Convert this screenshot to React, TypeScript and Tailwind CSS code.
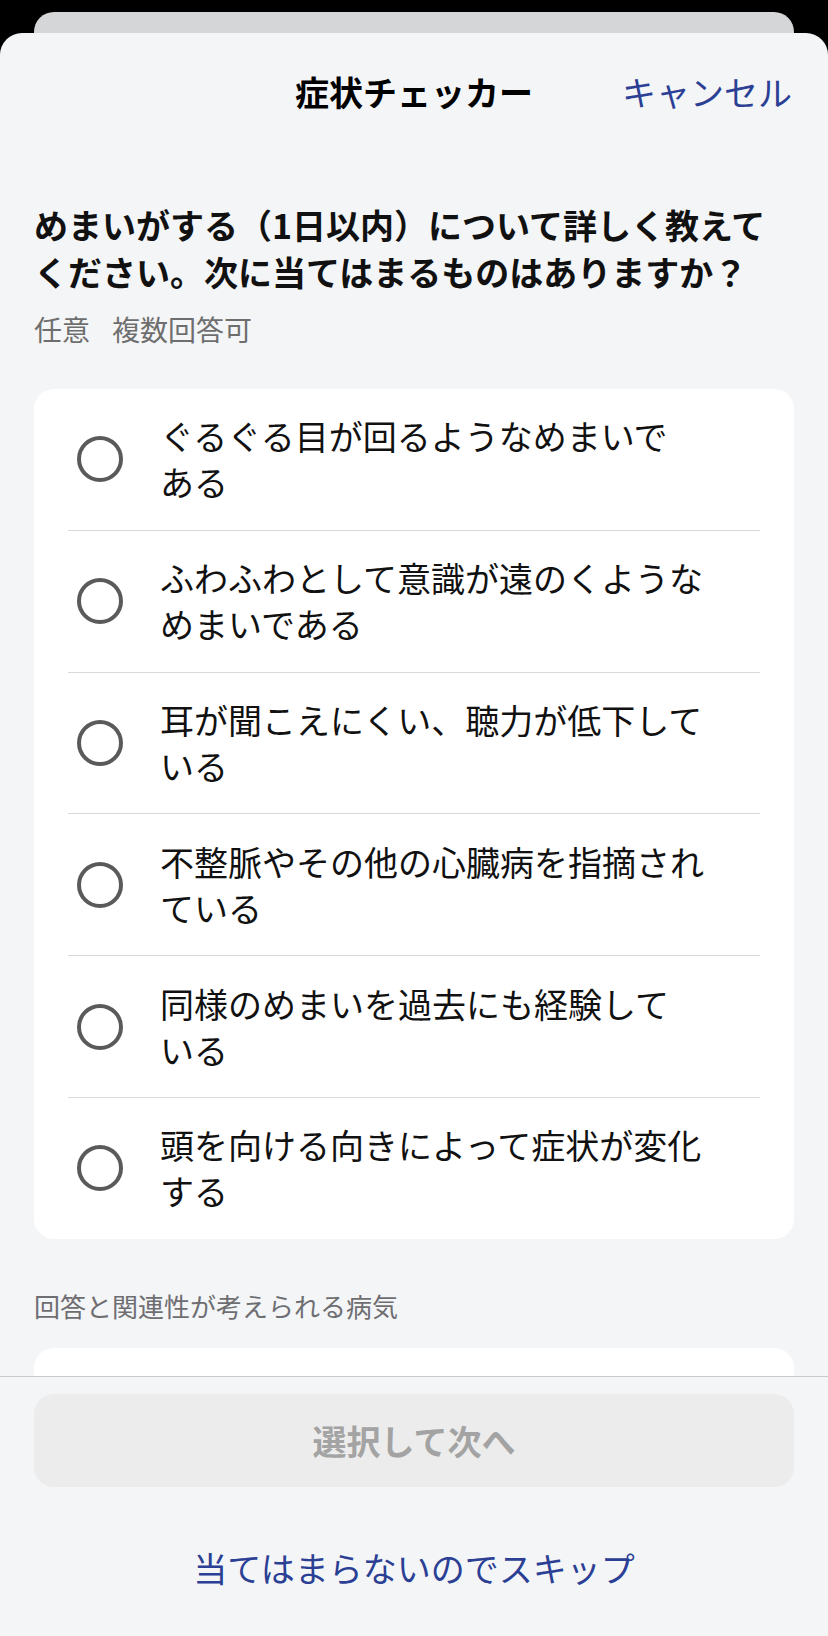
const options: string[][] = [
  ['ぐるぐる目が回るようなめまいで', 'ある'],
  ['ふわふわとして意識が遠のくような', 'めまいである'],
  ['耳が聞こえにくい、聴力が低下して', 'いる'],
  ['不整脈やその他の心臓病を指摘され', 'ている'],
  ['同様のめまいを過去にも経験して', 'いる'],
  ['頭を向ける向きによって症状が変化', 'する'],
];

const font = { fontFamily: '"Noto Sans CJK JP", "Noto Sans", sans-serif' };

function OptionRow({ lines }: { lines: string[] }) {
  return (
    <div className="flex items-center gap-[37px] pl-[43px] pr-[34px] py-[24.4px]">
      <div className="w-[46px] h-[46px] rounded-full border-[4px] border-[#5a5a5a] shrink-0" />
      <p className="text-[34px] leading-[46px] text-[#111]">
        {lines.map((l, i) => (
          <span key={i} className="block">
            {l}
          </span>
        ))}
      </p>
    </div>
  );
}

export default function App() {
  return (
    <div className="w-[828px] h-[1636px] bg-black flex flex-col overflow-hidden" style={font}>
      {/* stacked sheet behind */}
      <div className="h-[12px] shrink-0" />
      <div className="mx-[34px] h-[21px] shrink-0 rounded-t-[20px] bg-[#d5d6d8]" />

      {/* Sheet */}
      <div className="flex-1 min-h-0 bg-[#f4f5f7] rounded-t-[22px] flex flex-col">
        {/* Header */}
        <div className="h-[118px] shrink-0 relative flex items-center justify-center">
          <h1 className="text-[34px] font-bold text-black leading-none">症状チェッカー</h1>
          <button className="absolute right-[36px] top-1/2 -translate-y-1/2 text-[34px] leading-none text-[#2b3f94]">
            キャンセル
          </button>
        </div>

        {/* Scroll content */}
        <div className="flex-1 min-h-0 overflow-hidden px-[34px]">
          <h2 className="mt-[50px] text-[34px] font-bold leading-[47px] text-[#111]">
            <span className="block">めまいがする（1日以内）について詳しく教えて</span>
            <span className="block">ください。次に当てはまるものはありますか？</span>
          </h2>
          <p className="mt-[16px] text-[28px] leading-[36px] text-[#6e6e6e]">
            <span>任意</span>
            <span className="ml-[22px]">複数回答可</span>
          </p>

          <div className="mt-[42px] bg-white rounded-[20px]">
            {options.map((lines, i) => (
              <div key={i}>
                {i > 0 && <div className="mx-[34px] h-px bg-[#d9d9d9]" />}
                <OptionRow lines={lines} />
              </div>
            ))}
          </div>

          <p className="mt-[50px] text-[26px] leading-[34px] text-[#6e6e72]">回答と関連性が考えられる病気</p>
          <div className="mt-[25px] bg-white rounded-t-[20px] h-[200px]" />
        </div>

        {/* Bottom bar */}
        <div className="h-[260px] shrink-0 border-t border-[#c9c9cc] bg-[#f4f5f7] px-[34px] pt-[17px] flex flex-col items-center">
          <button className="w-full h-[93px] rounded-[20px] bg-[#ececec] text-[34px] font-bold text-[#a3a3a3]">
            選択して次へ
          </button>
          <button className="mt-[61px] text-[34px] leading-[40px] text-[#2b3f94]">当てはまらないのでスキップ</button>
        </div>
      </div>
    </div>
  );
}
